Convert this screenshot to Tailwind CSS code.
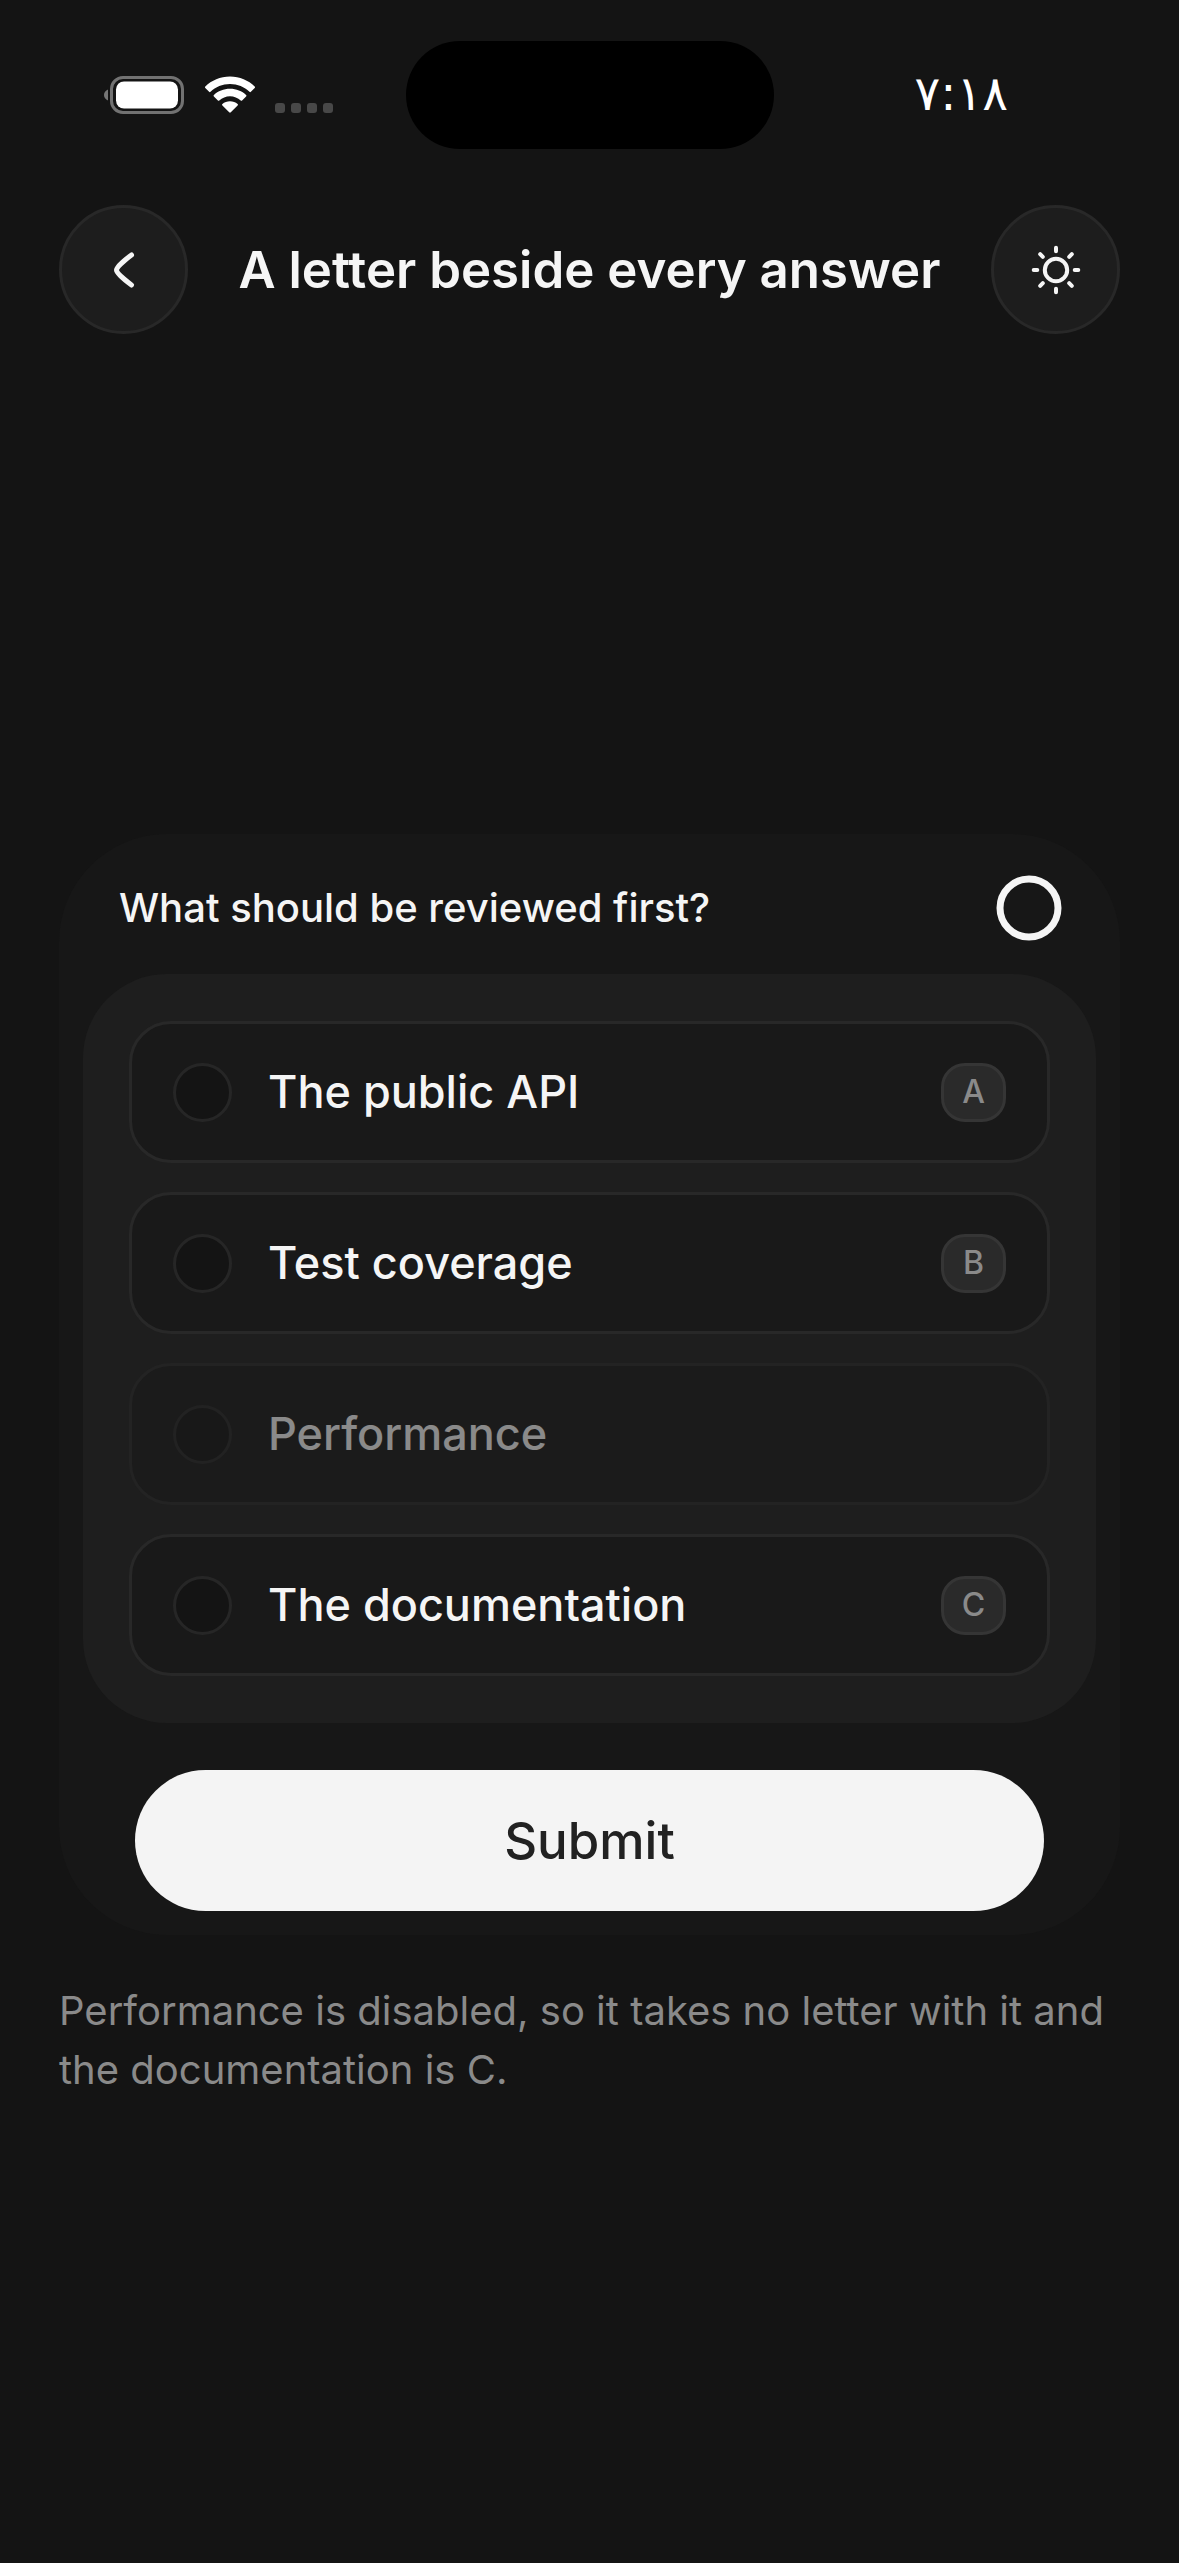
<!DOCTYPE html>
<html lang="en">
<head>
    <meta charset="UTF-8">
    <meta name="viewport" content="width=device-width, initial-scale=1.0">
    <script src="https://cdn.jsdelivr.net/npm/@tailwindcss/browser@4"></script>
    <title>A letter beside every answer</title>
</head>
<body class="bg-[#141414] text-[#f5f5f5] font-['Inter','DejaVu_Sans',sans-serif]">

    <div class="min-h-screen flex flex-col">

        <!-- status bar -->
        <div class="grid grid-cols-[1fr_368px_1fr] items-center pt-[41px]">
            <div class="flex items-center gap-5 pl-[103px]">
                <svg class="w-[82px] h-[40px]" viewBox="0 0 82 40" fill="none">
                    <path d="M5 14.500C2.500 15.500 1 17.500 1 20s1.500 4.500 4 5.500z" fill="#767676"/>
                    <rect x="8.500" y="2.500" width="71" height="35" rx="11.500" stroke="#727272" stroke-width="3"/>
                    <rect x="13" y="6.500" width="62" height="27" rx="8" fill="#fff"/>
                </svg>
                <svg class="w-[50px] h-[38px]" viewBox="0 0 50 38" fill="#fff">
                    <path d="M25 0.500C34.700 0.500 43.500 4.300 49.700 10.600a1 1 0 0 1 0 1.400L45.900 15.800a1 1 0 0 1-1.400 0C39.400 10.900 32.600 8 25 8S10.600 10.900 5.500 15.800a1 1 0 0 1-1.400 0L0.300 12a1 1 0 0 1 0-1.400C6.500 4.300 15.300 0.500 25 0.500z"/>
                    <path d="M25 12.800c6.400 0 12 2.300 16.100 6.200a1 1 0 0 1 0 1.500l-4 4a1 1 0 0 1-1.400 0C32.800 21.900 29.100 20.300 25 20.300S17.200 21.900 14.300 24.500a1 1 0 0 1-1.400 0l-4-4a1 1 0 0 1 0-1.500C13 15.100 18.600 12.800 25 12.800z"/>
                    <path d="M25 25.200c2.900 0 5.600 1 7.600 2.700a1 1 0 0 1 0 1.500L25.800 36.300a1.100 1.100 0 0 1-1.600 0L17.400 29.400a1 1 0 0 1 0-1.500C19.400 26.200 22.100 25.200 25 25.200z"/>
                </svg>
                <div class="flex gap-[6px] mt-[26px]">
                    <span class="size-[10px] rounded-[3px] bg-[#484848]"></span>
                    <span class="size-[10px] rounded-[3px] bg-[#484848]"></span>
                    <span class="size-[10px] rounded-[3px] bg-[#484848]"></span>
                    <span class="size-[10px] rounded-[3px] bg-[#484848]"></span>
                </div>
            </div>
            <div class="h-[108px] rounded-full bg-black"></div>
            <div class="pr-[30px] -mt-1 text-center text-[48px] leading-[60px] font-['DejaVu_Sans',sans-serif] text-white">٧:١٨</div>
        </div>

        <!-- header -->
        <header class="flex items-center justify-between px-[59px] mt-14">
            <button type="button" aria-label="Back" class="size-[129px] rounded-full bg-[#1d1d1d] border-[3px] border-[#282828] flex items-center justify-center">
                <svg class="size-[60px]" viewBox="0 0 24 24" fill="none" stroke="#f5f5f5" stroke-width="2" stroke-linecap="round" stroke-linejoin="round">
                    <path d="M15 6s-6 4.419-6 6 6 6 6 6"/>
                </svg>
            </button>
            <h1 class="text-[51px] leading-[66px] font-semibold">A letter beside every answer</h1>
            <button type="button" aria-label="Switch theme" class="size-[129px] rounded-full bg-[#1d1d1d] border-[3px] border-[#282828] flex items-center justify-center">
                <svg class="size-[60px]" viewBox="-30 -30 60 60" fill="none" stroke="#f5f5f5" stroke-width="4">
                    <circle r="11.200"/>
                    <path stroke-linecap="round" d="M0-22.300v3.600M0 22.300v-3.600M-22.300 0h3.600M22.300 0h-3.600M-15.800-15.800l2.600 2.600M15.800-15.800l-2.600 2.600M-15.800 15.800l2.600-2.600M15.800 15.800l-2.600-2.600"/>
                </svg>
            </button>
        </header>

        <main class="flex-1 flex flex-col justify-center px-[59px] pt-9">

            <form class="rounded-[108px] bg-[#171717] p-6">
                <div class="flex items-center justify-between pl-9 pr-[34px] h-[116px] pb-4">
                    <h2 id="question" class="text-[40px] leading-[54px] font-medium">What should be reviewed first?</h2>
                    <svg class="size-[66px]" viewBox="0 0 66 66" fill="none" role="img" aria-label="0 of 1 answered">
                        <circle cx="33" cy="33" r="29" stroke="#f5f5f5" stroke-width="7"/>
                    </svg>
                </div>

                <div role="radiogroup" aria-labelledby="question" class="rounded-[84px] bg-[#1e1e1e] px-[46px] py-[47px] flex flex-col gap-[29px]">
                    <label class="h-[142px] rounded-[42px] border-[3px] border-[#282828] bg-[#191919] px-[41px] flex items-center">
                        <input type="radio" name="answer" value="api" class="appearance-none size-[59px] rounded-full border-[3px] border-[#262626] bg-[#141414]">
                        <span class="flex-1 ml-9 text-[45px] leading-[60px] font-medium">The public API</span>
                        <kbd class="w-[65px] h-[59px] rounded-[24px] border-[3px] border-[#353535] bg-[#2a2a2a] flex items-center justify-center font-['Inter',sans-serif] text-[32px] leading-[40px] font-medium text-[#8a8a8a]">A</kbd>
                    </label>
                    <label class="h-[142px] rounded-[42px] border-[3px] border-[#282828] bg-[#191919] px-[41px] flex items-center">
                        <input type="radio" name="answer" value="tests" class="appearance-none size-[59px] rounded-full border-[3px] border-[#262626] bg-[#141414]">
                        <span class="flex-1 ml-9 text-[45px] leading-[60px] font-medium">Test coverage</span>
                        <kbd class="w-[65px] h-[59px] rounded-[24px] border-[3px] border-[#353535] bg-[#2a2a2a] flex items-center justify-center font-['Inter',sans-serif] text-[32px] leading-[40px] font-medium text-[#8a8a8a]">B</kbd>
                    </label>
                    <label class="h-[142px] rounded-[42px] border-[3px] border-[#282828] bg-[#191919] px-[41px] flex items-center opacity-50">
                        <input type="radio" name="answer" value="performance" disabled class="appearance-none size-[59px] rounded-full border-[3px] border-[#262626] bg-[#141414]">
                        <span class="flex-1 ml-9 text-[45px] leading-[60px] font-medium">Performance</span>
                    </label>
                    <label class="h-[142px] rounded-[42px] border-[3px] border-[#282828] bg-[#191919] px-[41px] flex items-center">
                        <input type="radio" name="answer" value="docs" class="appearance-none size-[59px] rounded-full border-[3px] border-[#262626] bg-[#141414]">
                        <span class="flex-1 ml-9 text-[45px] leading-[60px] font-medium">The documentation</span>
                        <kbd class="w-[65px] h-[59px] rounded-[24px] border-[3px] border-[#353535] bg-[#2a2a2a] flex items-center justify-center font-['Inter',sans-serif] text-[32px] leading-[40px] font-medium text-[#8a8a8a]">C</kbd>
                    </label>
                </div>

                <div class="px-[52px] pt-[47px]">
                    <button type="submit" class="w-full h-[141px] rounded-full bg-[#f4f4f4] text-[#222] text-[51px] leading-[66px] font-medium">Submit</button>
                </div>
            </form>

            <p class="mt-[46px] text-[40px] leading-[59px] text-[#8a8a8a]">Performance is disabled, so it takes no letter with it and the documentation is C.</p>
        </main>
    </div>

</body>
</html>
